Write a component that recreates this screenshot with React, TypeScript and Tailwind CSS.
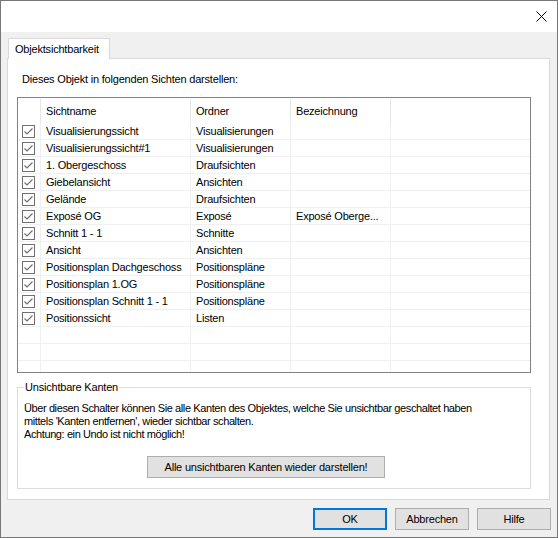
import React from "react";

interface Row {
  name: string;
  folder: string;
  label?: string;
}

const rows: Row[] = [
  { name: "Visualisierungssicht", folder: "Visualisierungen" },
  { name: "Visualisierungssicht#1", folder: "Visualisierungen" },
  { name: "1. Obergeschoss", folder: "Draufsichten" },
  { name: "Giebelansicht", folder: "Ansichten" },
  { name: "Gelände", folder: "Draufsichten" },
  { name: "Exposé OG", folder: "Exposé", label: "Exposé Oberge..." },
  { name: "Schnitt 1 - 1", folder: "Schnitte" },
  { name: "Ansicht", folder: "Ansichten" },
  { name: "Positionsplan Dachgeschoss", folder: "Positionspläne" },
  { name: "Positionsplan 1.OG", folder: "Positionspläne" },
  { name: "Positionsplan Schnitt 1 - 1", folder: "Positionspläne" },
  { name: "Positionssicht", folder: "Listen" },
];

function CheckBox() {
  return (
    <div className="w-[13px] h-[13px] border border-[#707070] bg-white flex items-center justify-center">
      <svg width="11" height="11" viewBox="0 0 11 11">
        <path d="M1.5 5.5 L4 8 L9.5 2.5" fill="none" stroke="#707070" strokeWidth="1.2" />
      </svg>
    </div>
  );
}

function Button({ children, primary, className = "" }: { children: React.ReactNode; primary?: boolean; className?: string }) {
  return (
    <div
      className={`h-[22px] flex items-center justify-center bg-[#e1e1e1] text-black ${
        primary ? "border-2 border-[#0078d7]" : "border border-[#adadad]"
      } ${className}`}
    >
      {children}
    </div>
  );
}

export default function App() {
  const empty = Array.from({ length: 3 });

  return (
    <div
      className="w-[558px] h-[538px] border border-[#777777] flex flex-col text-[11px] tracking-[-0.2px] text-black bg-[#f0f0f0]"
      style={{ fontFamily: '"Liberation Sans", Arial, sans-serif' }}
    >
      {/* title bar */}
      <div className="h-[31px] bg-white flex justify-end items-start shrink-0">
        <svg width="11" height="11" viewBox="0 0 11 11" className="mt-[10px] mr-[10px]">
          <path d="M0.5 0.5 L10.5 10.5 M10.5 0.5 L0.5 10.5" stroke="#000" strokeWidth="1" />
        </svg>
      </div>

      <div className="flex-1 px-[6px] pt-[6px] flex flex-col">
        {/* tab header */}
        <div className="flex">
          <div className="ml-[1px] w-[102px] h-[21px] bg-white border border-b-0 border-[#d9d9d9] flex items-center pl-[6px] relative z-10 -mb-px">
            Objektsichtbarkeit
          </div>
        </div>

        {/* tab panel */}
        <div className="h-[442px] w-[543px] bg-white border border-[#d9d9d9] px-[9px] pt-[14px] flex flex-col">
          <div className="ml-[5px] h-[13px] leading-[13px]">Dieses Objekt in folgenden Sichten darstellen:</div>

          {/* list */}
          <div className="mt-[11px] w-[514px] h-[276px] border border-[#828282] overflow-hidden flex flex-col">
            <div className="h-[25px] flex shrink-0 pt-[1px]">
              <div className="w-[23px] border-r border-[#e5e5e5]" />
              <div className="w-[150px] border-r border-[#e5e5e5] pl-[5px] flex items-center">Sichtname</div>
              <div className="w-[100px] border-r border-[#e5e5e5] pl-[5px] flex items-center">Ordner</div>
              <div className="w-[100px] border-r border-[#e5e5e5] pl-[5px] flex items-center">Bezeichnung</div>
              <div className="flex-1" />
            </div>
            {rows.map((r) => (
              <div key={r.name} className="h-[17px] flex shrink-0 border-b border-[#f0f0f0]">
                <div className="w-[23px] border-r border-[#f0f0f0] flex items-center pl-[4px]">
                  <CheckBox />
                </div>
                <div className="w-[150px] border-r border-[#f0f0f0] pl-[5px] pt-[1px] flex items-center whitespace-nowrap">{r.name}</div>
                <div className="w-[100px] border-r border-[#f0f0f0] pl-[5px] pt-[1px] flex items-center whitespace-nowrap">{r.folder}</div>
                <div className="w-[100px] border-r border-[#f0f0f0] pl-[5px] pt-[1px] flex items-center whitespace-nowrap">{r.label ?? ""}</div>
                <div className="flex-1" />
              </div>
            ))}
            {empty.map((_, i) => (
              <div key={i} className="h-[17px] flex shrink-0 border-b border-[#f0f0f0]">
                <div className="w-[23px] border-r border-[#f0f0f0]" />
                <div className="w-[150px] border-r border-[#f0f0f0]" />
                <div className="w-[100px] border-r border-[#f0f0f0]" />
                <div className="w-[100px] border-r border-[#f0f0f0]" />
                <div className="flex-1" />
              </div>
            ))}
          </div>

          {/* group box */}
          <fieldset className="mt-[8px] w-[514px] h-[108px] border border-[#dcdcdc] px-[6px] pb-0">
            <legend className="px-[1px] leading-[13px]">Unsichtbare Kanten</legend>
            <div className="mt-[8px] leading-[13px] tracking-[-0.4px]">
              Über diesen Schalter können Sie alle Kanten des Objektes, welche Sie unsichtbar geschaltet haben
              <br />
              mittels 'Kanten entfernen', wieder sichtbar schalten.
              <br />
              Achtung: ein Undo ist nicht möglich!
            </div>
            <Button className="mt-[15px] ml-[123px] w-[238px] h-[21px]">Alle unsichtbaren Kanten wieder darstellen!</Button>
          </fieldset>
        </div>

        {/* dialog buttons */}
        <div className="mt-[8px] flex justify-end gap-[8px]">
          <Button primary className="w-[74px]">OK</Button>
          <Button className="w-[74px]">Abbrechen</Button>
          <Button className="w-[74px]">Hilfe</Button>
        </div>
      </div>
    </div>
  );
}
